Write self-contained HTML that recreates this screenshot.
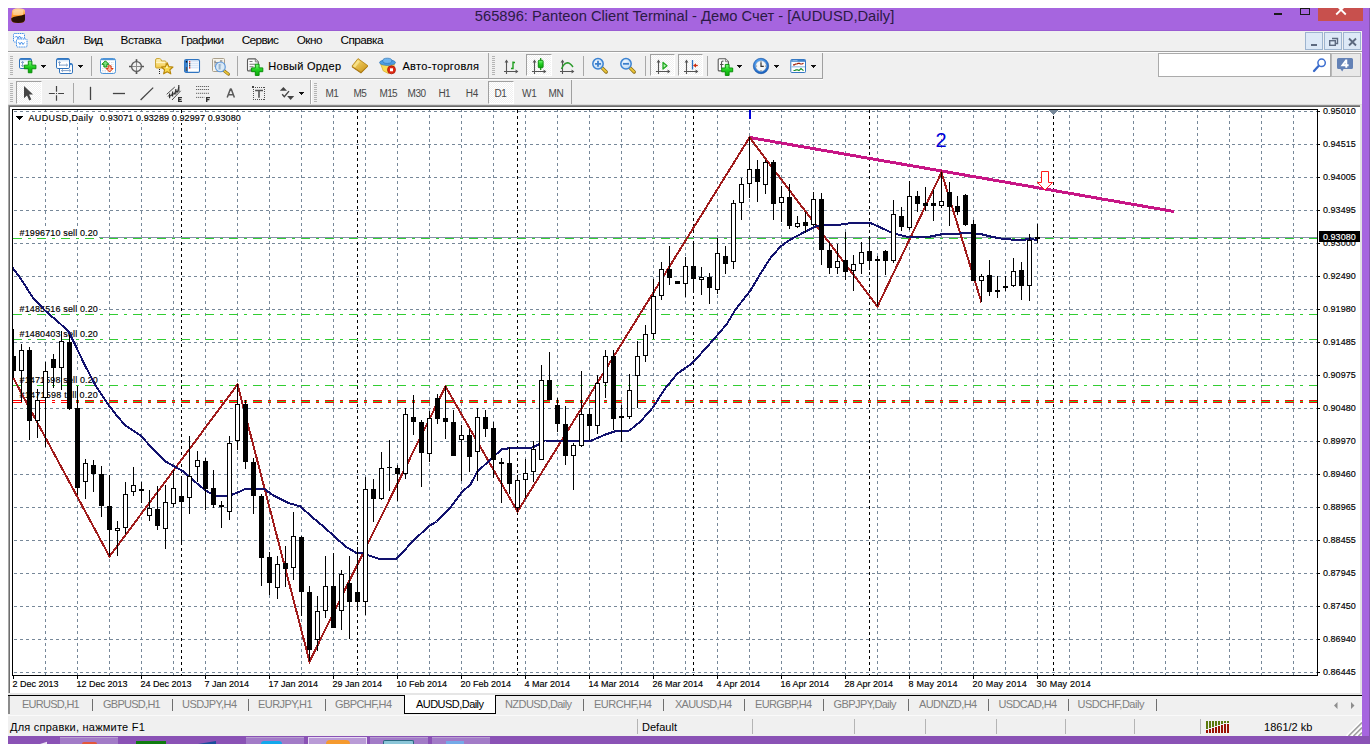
<!DOCTYPE html>
<html><head><meta charset="utf-8"><title>565896: Panteon Client Terminal</title>
<style>
html,body{margin:0;padding:0;background:#fff;width:1370px;height:744px;overflow:hidden}
body{position:relative;font-family:"Liberation Sans", sans-serif}
body>div,body>svg,body>span{position:absolute;display:block}
.t{white-space:pre;font-family:"Liberation Sans", sans-serif}
</style></head><body>
<svg style="left:0;top:0" width="0" height="0"><defs><linearGradient id="gpl" x1="0" y1="0" x2="0" y2="1"><stop offset="0" stop-color="#7dff7d"/><stop offset="0.5" stop-color="#1fd01f"/><stop offset="1" stop-color="#0ca40c"/></linearGradient><linearGradient id="gfo" x1="0" y1="0" x2="0" y2="1"><stop offset="0" stop-color="#fff6c0"/><stop offset="1" stop-color="#f2c744"/></linearGradient><linearGradient id="ggo" x1="0" y1="0" x2="1" y2="1"><stop offset="0" stop-color="#fbe27a"/><stop offset="1" stop-color="#c98f12"/></linearGradient><radialGradient id="gle" cx="0.4" cy="0.35" r="0.7"><stop offset="0" stop-color="#f4faff"/><stop offset="1" stop-color="#b9d6f2"/></radialGradient><linearGradient id="gor" x1="0" y1="0" x2="0" y2="1"><stop offset="0" stop-color="#ffd9a0"/><stop offset="0.5" stop-color="#ff9a2a"/><stop offset="1" stop-color="#f07a10"/></linearGradient><radialGradient id="gck" cx="0.4" cy="0.3" r="0.8"><stop offset="0" stop-color="#5fb0ff"/><stop offset="1" stop-color="#1258b8"/></radialGradient></defs></svg>
<div style="left:8px;top:8px;width:1362px;height:23px;background:#a665df;"></div>
<div style="left:1362px;top:8px;width:8px;height:736px;background:#a665df;"></div>
<div style="left:8px;top:31px;width:1354px;height:705px;background:#f0f0f0;"></div>
<div style="left:8px;top:30px;width:1354px;height:1px;background:#9a5cd2;"></div>
<svg style="left:11px;top:8px;overflow:visible" width="15" height="15" viewBox="0 0 15 15" ><path d="M1 4Q1 0.3 7 0.3Q14 0.3 14 3V11.5Q14 15 7.2 15Q0.3 15 0.3 11.5Z" fill="url(#gor)"/><path d="M2.2 3Q6 0.8 12 2.2V7H2.2Z" fill="#ffe2c0" opacity="0.55"/><path d="M0.3 10.2Q2 8.8 6 8.2Q11 7.6 14 6.2V11.5Q14 15 7.2 15Q0.3 15 0.3 11.5Z" fill="#2a1206"/></svg>
<span class="t" style="left:474.8px;top:8.56px;font-size:14.7px;line-height:14.7px;color:#2b1a45;font-weight:400;letter-spacing:0.011px;">565896: Panteon Client Terminal - Демо Счет - [AUDUSD,Daily]</span>
<div style="left:1274px;top:13px;width:8px;height:2px;background:#1a1a1a;"></div>
<div style="left:1300px;top:8px;width:8px;height:5px;border:1px solid #1a1a1a"></div>
<div style="left:1318px;top:8px;width:45px;height:13px;background:#c8504d;"></div>
<svg style="left:1335px;top:8px" width="12" height="8" viewBox="0 0 12 8"><path d="M1.2 -3 L10.8 6.5 M10.8 -3 L1.2 6.5" stroke="#fff" stroke-width="1.8" fill="none"/></svg>
<svg style="left:12px;top:33px;overflow:visible" width="16" height="15" viewBox="0 0 16 15" ><rect x="1.5" y="0.5" width="11" height="8.5" rx="1" fill="#fff" stroke="#3b8be8" stroke-width="1" stroke-dasharray="1.2 0.6"/><path d="M3 4.5L4.5 3L6 5.5L7.5 3L9 5.5L10.5 4" stroke="#3b8be8" stroke-width="0.9" fill="none"/><rect x="4.5" y="6" width="10.5" height="8" rx="1" fill="#fff" stroke="#3b8be8" stroke-width="1" stroke-dasharray="1.2 0.6"/><path d="M6.5 9L8 11.5L9.5 9L11 11.5L12.5 9.5" stroke="#3b8be8" stroke-width="0.9" fill="none"/></svg>
<span class="t" style="left:36.6px;top:34.91px;font-size:11.8px;line-height:11.8px;color:#000;font-weight:400;letter-spacing:-0.329px;">Файл</span>
<span class="t" style="left:83.6px;top:34.91px;font-size:11.8px;line-height:11.8px;color:#000;font-weight:400;letter-spacing:-1.048px;">Вид</span>
<span class="t" style="left:120.5px;top:34.91px;font-size:11.8px;line-height:11.8px;color:#000;font-weight:400;letter-spacing:-0.480px;">Вставка</span>
<span class="t" style="left:181.1px;top:34.91px;font-size:11.8px;line-height:11.8px;color:#000;font-weight:400;letter-spacing:-0.658px;">Графики</span>
<span class="t" style="left:241.7px;top:34.91px;font-size:11.8px;line-height:11.8px;color:#000;font-weight:400;letter-spacing:-0.651px;">Сервис</span>
<span class="t" style="left:296.7px;top:34.91px;font-size:11.8px;line-height:11.8px;color:#000;font-weight:400;letter-spacing:-0.530px;">Окно</span>
<span class="t" style="left:340.5px;top:34.91px;font-size:11.8px;line-height:11.8px;color:#000;font-weight:400;letter-spacing:-0.540px;">Справка</span>
<div style="left:1305px;top:32px;width:16px;height:16px;background:#dde9f7;border:1px solid #9db4cf"></div>
<svg style="left:1306px;top:34px;overflow:visible" width="16" height="15" viewBox="0 0 16 15" ><rect x="5" y="10" width="6" height="2" fill="#5d6a80"/></svg>
<div style="left:1324px;top:32px;width:16px;height:16px;background:#dde9f7;border:1px solid #9db4cf"></div>
<svg style="left:1325px;top:34px;overflow:visible" width="16" height="15" viewBox="0 0 16 15" ><path d="M7 4.5H12.5V9.5H11" stroke="#5d6a80" stroke-width="1.4" fill="none"/><rect x="4.7" y="6.7" width="5.6" height="4.6" stroke="#5d6a80" stroke-width="1.4" fill="none"/></svg>
<div style="left:1343px;top:32px;width:16px;height:16px;background:#dde9f7;border:1px solid #9db4cf"></div>
<svg style="left:1344px;top:34px;overflow:visible" width="16" height="15" viewBox="0 0 16 15" ><path d="M5 4.5L12 11.5M12 4.5L5 11.5" stroke="#5d6a80" stroke-width="1.9"/></svg>
<div style="left:8px;top:51px;width:1354px;height:1px;background:#a0a0a0;"></div>
<div style="left:8px;top:52px;width:1354px;height:1px;background:#fdfdfd;"></div>
<div style="left:8px;top:78px;width:815px;height:1px;background:#a0a0a0;"></div>
<div style="left:822px;top:53px;width:1px;height:25px;background:#a0a0a0;"></div>
<div style="left:8px;top:79px;width:815px;height:1px;background:#fdfdfd;"></div>
<div style="left:10px;top:56px;width:3px;height:19px;background:repeating-linear-gradient(#b4b4b4 0 1px,transparent 1px 2px)"></div>
<div style="left:492px;top:56px;width:3px;height:19px;background:repeating-linear-gradient(#b4b4b4 0 1px,transparent 1px 2px)"></div>
<div style="left:526px;top:54px;width:24px;height:20px;border-left:1px solid #a0a0a0;border-top:1px solid #a0a0a0;border-right:1px solid #fff;border-bottom:1px solid #fff;background:repeating-conic-gradient(#fff 0 25%,#f0f0f0 0 50%) 0 0/2px 2px"></div>
<div style="left:650px;top:54px;width:23px;height:20px;border-left:1px solid #a0a0a0;border-top:1px solid #a0a0a0;border-right:1px solid #fff;border-bottom:1px solid #fff;background:repeating-conic-gradient(#fff 0 25%,#f0f0f0 0 50%) 0 0/2px 2px"></div>
<div style="left:678px;top:54px;width:23px;height:20px;border-left:1px solid #a0a0a0;border-top:1px solid #a0a0a0;border-right:1px solid #fff;border-bottom:1px solid #fff;background:repeating-conic-gradient(#fff 0 25%,#f0f0f0 0 50%) 0 0/2px 2px"></div>
<svg style="left:19px;top:58px;overflow:visible" width="18" height="16" viewBox="0 0 18 16" ><rect x="0.5" y="0.5" width="12" height="10" rx="1.3" fill="#fff" stroke="#2f72bc" stroke-width="1"/><rect x="1" y="0.8" width="11" height="1.3" fill="#3f82cc"/><rect x="1" y="2.1" width="11" height="1.4" fill="#dce9f8"/><path d="M3.6 3.6V8.6M2.2 5L3.6 3.4L5 5M2.2 7.2L3.6 8.8L5 7.2" stroke="#7f9fc8" stroke-width="1" fill="none"/><path d="M9.299999999999999 3.1499999999999995H12.9V7.1499999999999995H16.9V10.75H12.9V14.75H9.299999999999999V10.75H5.3V7.1499999999999995H9.299999999999999Z" fill="url(#gpl)" stroke="#0a8f0a" stroke-width="1" stroke-linejoin="round"/></svg>
<svg style="left:56px;top:58px;overflow:visible" width="17" height="16" viewBox="0 0 17 16" ><rect x="3.5" y="5.5" width="13" height="10" rx="1.3" fill="#fff" stroke="#2f72bc" stroke-width="1"/><rect x="4" y="5.8" width="12" height="1.3" fill="#3f82cc"/><rect x="4" y="7.1" width="12" height="1.4" fill="#dce9f8"/><path d="M5.6 12.6H14.6M6.8 11.4L5.4 12.6L6.8 13.8M13.4 11.4L14.8 12.6L13.4 13.8" stroke="#7f9fc8" stroke-width="1" fill="none"/><rect x="0.5" y="0.5" width="13" height="10" rx="1.3" fill="#fff" stroke="#2f72bc" stroke-width="1"/><rect x="1" y="0.8" width="12" height="1.3" fill="#3f82cc"/><rect x="1" y="2.1" width="12" height="1.4" fill="#dce9f8"/><path d="M3.5 3.8V8M3.5 7.1H11.4M2.3 5L3.5 3.6L4.7 5M10.2 5.9L11.6 7.1L10.2 8.3" stroke="#7f9fc8" stroke-width="1" fill="none"/></svg>
<svg style="left:100px;top:58px;overflow:visible" width="16" height="16" viewBox="0 0 16 16" ><rect x="0.5" y="0.5" width="15" height="15" rx="2" fill="#fff" stroke="#4f94d8" stroke-width="1"/><rect x="1" y="0.8" width="14" height="1.4" fill="#4f94d8"/><path d="M8.5 4.5H14M8.5 6.5H14M8.5 8.5H14M2 10.5H6M2 12.5H7M2 14H14" stroke="#d0d4da" stroke-width="0.8" stroke-dasharray="1.5 1"/><path d="M5.4 2.8L8.9 6.3H6.9V9H3.9V6.3H1.9Z" fill="#7be07b" stroke="#0c8c0c" stroke-width="1" stroke-linejoin="miter"/><path d="M9.6 14L13.1 10.5H11.1V7.8H8.1V10.5H6.1Z" fill="#ffb49e" stroke="#d83a10" stroke-width="1" stroke-linejoin="miter"/></svg>
<svg style="left:128px;top:58px;overflow:visible" width="17" height="17" viewBox="0 0 17 17" ><path d="M1 8.5H15.9M8.5 1.3V15.9" stroke="#8c8c8c" stroke-width="1"/><path d="M1 8.5H4M13 8.5H15.9M8.5 1.3V4M8.5 13V15.9" stroke="#555" stroke-width="1.7"/><circle cx="8.5" cy="8.5" r="4.9" fill="none" stroke="#5c5c5c" stroke-width="1.3"/></svg>
<svg style="left:155px;top:58px;overflow:visible" width="19" height="17" viewBox="0 0 19 17" ><path d="M0.6 2Q0.6 0.6 2 0.6H4.6Q5.6 0.6 6 1.6L6.5 3H10Q11 3 11 4V9.3Q11 10 10 10H1.6Q0.6 10 0.6 9Z" fill="url(#gfo)" stroke="#c8a02a" stroke-width="1"/><path d="M1 4.3H10.6" stroke="#fffbe0" stroke-width="0.9"/><rect x="4" y="11" width="1" height="1" fill="#222"/><rect x="4" y="13" width="1" height="1" fill="#222"/><rect x="4" y="15" width="1" height="1" fill="#222"/><path d="M12.20 4.80L13.85 8.63L18.00 9.01L14.86 11.77L15.79 15.84L12.20 13.70L8.61 15.84L9.54 11.77L6.40 9.01L10.55 8.63Z" fill="#f8d84e" stroke="#b8860b" stroke-width="1.1" stroke-linejoin="round"/><path d="M12 7.4L13 10L10.4 10.2Z" fill="#fff6b8"/></svg>
<svg style="left:184px;top:58px;overflow:visible" width="16" height="16" viewBox="0 0 16 16" ><rect x="0.6" y="1.6" width="14.9" height="12.8" rx="1.5" fill="#fff" stroke="#2f74c0" stroke-width="1.1"/><rect x="1" y="2" width="3" height="12" fill="#3b82cf"/><rect x="1.8" y="3" width="1.4" height="1.5" fill="#111"/><rect x="1.8" y="9" width="1.4" height="4" fill="#555"/><path d="M5 3.8H14.5M5 5.8H14.5M5 7.8H14.5M5 9.8H14.5" stroke="#c9dcf4" stroke-width="1"/><rect x="5" y="3.2" width="1.3" height="1.3" fill="#e01010"/><rect x="5" y="5.2" width="1.3" height="1.3" fill="#222"/><rect x="5" y="7.2" width="1.3" height="1.3" fill="#222"/><rect x="5" y="9.2" width="1.3" height="1.3" fill="#e01010"/></svg>
<svg style="left:212px;top:58px;overflow:visible" width="18" height="18" viewBox="0 0 18 18" ><rect x="0.5" y="0.5" width="12" height="13" rx="1" fill="#f6f3ea" stroke="#aaa08c" stroke-width="1"/><path d="M3 2.5V9M2 4H4M9 2V8M8 3H10.5M3 4.5H9" stroke="#8a8a8a" stroke-width="0.9" fill="none"/><path d="M12 12.6L16.4 16.2" stroke="#8a6a10" stroke-width="3" stroke-linecap="round"/><path d="M12.2 12.8L16.2 16" stroke="#e9c53a" stroke-width="1.7" stroke-linecap="round"/><circle cx="8.4" cy="8.9" r="4.9" fill="#d6e8f8" fill-opacity="0.85" stroke="#5f9ade" stroke-width="1.1"/><path d="M7.6 6V11.5" stroke="#9ab4cc" stroke-width="2"/></svg>
<svg style="left:247px;top:58px;overflow:visible" width="17" height="18" viewBox="0 0 17 18" ><path d="M0.5 1.9Q0.5 0.9 1.5 0.9H8.3L11.3 3.9V11.9Q11.3 12.9 10.3 12.9H1.5Q0.5 12.9 0.5 11.9Z" fill="#fdfdfd" stroke="#5a5a5a" stroke-width="1.1"/><path d="M8.3 0.9V3.9H11.3" fill="#ddd" stroke="#6f6f6f" stroke-width="0.8"/><path d="M2.5 3.5H5.5M2.5 6.2H8.5M2.5 8.7H6.5M2.5 11.2H5" stroke="#7a7a7a" stroke-width="1.1"/><path d="M8.299999999999999 6.200000000000001H12.1V9.9H15.799999999999999V13.700000000000001H12.1V17.4H8.299999999999999V13.700000000000001H4.6V9.9H8.299999999999999Z" fill="url(#gpl)" stroke="#0a8f0a" stroke-width="1" stroke-linejoin="round"/></svg>
<svg style="left:351px;top:58px;overflow:visible" width="18" height="17" viewBox="0 0 18 17" ><path d="M0.9 9.2L7 1L17 8.6L10 15.6Z" fill="#9c6b10"/><path d="M0.9 8.2L7 0.6L17 7.8L10 14.4Z" fill="url(#ggo)" stroke="#b07f14" stroke-width="0.8" stroke-linejoin="round"/><path d="M2 8.2L7 2L9 3.5L4 9.7Z" fill="#fff2a8" opacity="0.6"/></svg>
<svg style="left:379px;top:58px;overflow:visible" width="17" height="17" viewBox="0 0 17 17" ><path d="M1.5 5.5L15.5 5.5L14 11L9.5 15.6L4.2 12.8Z" fill="#f8dc55" stroke="#d9b02a" stroke-width="0.8" stroke-linejoin="round"/><ellipse cx="8.5" cy="4.6" rx="8" ry="2.8" fill="#4c9de2" stroke="#2b73b8" stroke-width="0.7"/><ellipse cx="8.3" cy="2.8" rx="4.6" ry="2.6" fill="#6fb4ee" stroke="#2b73b8" stroke-width="0.7"/><circle cx="12.5" cy="11.8" r="4" fill="#e02a12" stroke="#a81808" stroke-width="0.8"/><rect x="11" y="10.3" width="3" height="3" fill="#fff"/></svg>
<svg style="left:503px;top:58px;overflow:visible" width="16" height="17" viewBox="0 0 16 17" ><path d="M3.5 3V16M1 13.5H14" stroke="#555" stroke-width="1.1" fill="none"/><path d="M3.5 1.6L1.6 4.4H5.4Z M15.4 13.5L12.6 11.6V15.4Z" fill="#555"/><path d="M10 3.6V11.3M8 10.5H10M10 4.5H12" stroke="#1e9e1e" stroke-width="1.4" fill="none"/></svg>
<svg style="left:531px;top:58px;overflow:visible" width="16" height="17" viewBox="0 0 16 17" ><path d="M3.5 3V16M1 13.5H14" stroke="#555" stroke-width="1.1" fill="none"/><path d="M3.5 1.6L1.6 4.4H5.4Z M15.4 13.5L12.6 11.6V15.4Z" fill="#555"/><path d="M9.7 0V12" stroke="#0f8f0f" stroke-width="1.2"/><rect x="7.3" y="2.3" width="4.8" height="7.4" rx="0.8" fill="url(#gpl)" stroke="#0f8f0f" stroke-width="1"/></svg>
<svg style="left:559px;top:58px;overflow:visible" width="16" height="17" viewBox="0 0 16 17" ><path d="M3.5 3V16M1 13.5H14" stroke="#555" stroke-width="1.1" fill="none"/><path d="M3.5 1.6L1.6 4.4H5.4Z M15.4 13.5L12.6 11.6V15.4Z" fill="#555"/><path d="M2.5 11Q5 5 8.5 4.8Q11 5 14 9" stroke="#2a9a2a" stroke-width="1.4" fill="none"/></svg>
<svg style="left:591px;top:58px;overflow:visible" width="17" height="17" viewBox="0 0 17 17" ><path d="M10.6 9.4L15.2 14.0" stroke="#8a6a10" stroke-width="3.4" stroke-linecap="round"/><path d="M10.8 9.6L15 13.8" stroke="#e9c53a" stroke-width="2" stroke-linecap="round"/><circle cx="7" cy="5.8" r="5.2" fill="url(#gle)" stroke="#3c83d2" stroke-width="1.5"/><path d="M4 5.8H10M7 2.8V8.8" stroke="#3c7fcc" stroke-width="1.8"/></svg>
<svg style="left:619px;top:58px;overflow:visible" width="17" height="17" viewBox="0 0 17 17" ><path d="M10.6 9.4L15.2 14.0" stroke="#8a6a10" stroke-width="3.4" stroke-linecap="round"/><path d="M10.8 9.6L15 13.8" stroke="#e9c53a" stroke-width="2" stroke-linecap="round"/><circle cx="7" cy="5.8" r="5.2" fill="url(#gle)" stroke="#3c83d2" stroke-width="1.5"/><path d="M4 5.8H10" stroke="#3c7fcc" stroke-width="1.8"/></svg>
<svg style="left:655px;top:58px;overflow:visible" width="16" height="17" viewBox="0 0 16 17" ><path d="M3.5 3V16M1 13.5H14" stroke="#555" stroke-width="1.1" fill="none"/><path d="M3.5 1.6L1.6 4.4H5.4Z M15.4 13.5L12.6 11.6V15.4Z" fill="#555"/><path d="M8 4.4L12 7.7L8 11Z" fill="#b8f0b8" stroke="#1faa1f" stroke-width="1.3" stroke-linejoin="round"/></svg>
<svg style="left:683px;top:58px;overflow:visible" width="16" height="17" viewBox="0 0 16 17" ><path d="M3.5 3V16M1 13.5H14" stroke="#555" stroke-width="1.1" fill="none"/><path d="M3.5 1.6L1.6 4.4H5.4Z M15.4 13.5L12.6 11.6V15.4Z" fill="#555"/><path d="M9.5 2V11.5" stroke="#2a6fc0" stroke-width="1.3"/><path d="M10.6 7.5H14.8" stroke="#d03010" stroke-width="1.3"/><path d="M10.3 7.5L13 5.3V9.7Z" fill="#d03010"/></svg>
<svg style="left:716px;top:58px;overflow:visible" width="18" height="18" viewBox="0 0 18 18" ><path d="M2.2 1.7Q2.2 0.7 3.2 0.7H9.399999999999999L12.399999999999999 3.7V11.899999999999999Q12.399999999999999 12.899999999999999 11.399999999999999 12.899999999999999H3.2Q2.2 12.899999999999999 2.2 11.899999999999999Z" fill="#fdfdfd" stroke="#5a5a5a" stroke-width="1.1"/><path d="M9.399999999999999 0.7V3.7H12.399999999999999" fill="#ddd" stroke="#6f6f6f" stroke-width="0.8"/><path d="M7.5 3.2Q5.5 2.8 5.5 5V10.5M4 6.5H7.5" stroke="#555" stroke-width="1.1" fill="none"/><path d="M9.299999999999999 6.4H13.1V10.0H16.7V13.8H13.1V17.4H9.299999999999999V13.8H5.699999999999999V10.0H9.299999999999999Z" fill="url(#gpl)" stroke="#0a8f0a" stroke-width="1" stroke-linejoin="round"/></svg>
<svg style="left:753px;top:58px;overflow:visible" width="16" height="16" viewBox="0 0 16 16" ><circle cx="8" cy="8" r="7.7" fill="url(#gck)" stroke="#0f4c9c" stroke-width="0.6"/><circle cx="8" cy="8" r="5.3" fill="#f4f6f8" stroke="#9ab" stroke-width="0.5"/><path d="M8 4.2V8.3H10.8" stroke="#333" stroke-width="1.2" fill="none"/><circle cx="8" cy="3.6" r="0.5" fill="#666"/><circle cx="8" cy="12.4" r="0.5" fill="#666"/><circle cx="3.6" cy="8" r="0.5" fill="#666"/><circle cx="12.4" cy="8" r="0.5" fill="#666"/></svg>
<svg style="left:790px;top:58px;overflow:visible" width="16" height="16" viewBox="0 0 16 16" ><rect x="0.8" y="1.5" width="14.7" height="13" rx="0.8" fill="#fff" stroke="#3577c2" stroke-width="1"/><rect x="1.2" y="1.8" width="13.9" height="2" fill="#3f82cc"/><rect x="2.5" y="2.3" width="5" height="0.8" fill="#a9cbee"/><rect x="1.3" y="8.2" width="13.7" height="1.2" fill="#9cc0ea"/><path d="M3 6.8H4.5L5.5 6H7L8 5.4H9.5L10.5 6H12L13.5 5.2" stroke="#a3210c" stroke-width="1.2" fill="none"/><path d="M3.5 12.5H5L6 11.8H7.5L9 12.6L11 10.6L13.5 12.6" stroke="#138a24" stroke-width="1.2" fill="none"/></svg>
<svg style="left:41px;top:65px" width="5" height="3" viewBox="0 0 5 3" shape-rendering="crispEdges"><path d="M0 0H5L2.5 3Z" fill="#111"/></svg>
<svg style="left:78px;top:65px" width="5" height="3" viewBox="0 0 5 3" shape-rendering="crispEdges"><path d="M0 0H5L2.5 3Z" fill="#111"/></svg>
<svg style="left:737px;top:65px" width="5" height="3" viewBox="0 0 5 3" shape-rendering="crispEdges"><path d="M0 0H5L2.5 3Z" fill="#111"/></svg>
<svg style="left:774px;top:65px" width="5" height="3" viewBox="0 0 5 3" shape-rendering="crispEdges"><path d="M0 0H5L2.5 3Z" fill="#111"/></svg>
<svg style="left:811px;top:65px" width="5" height="3" viewBox="0 0 5 3" shape-rendering="crispEdges"><path d="M0 0H5L2.5 3Z" fill="#111"/></svg>
<div style="left:91px;top:56px;width:1px;height:20px;background:#a8a8a8;"></div>
<div style="left:237px;top:56px;width:1px;height:20px;background:#a8a8a8;"></div>
<div style="left:583px;top:56px;width:1px;height:20px;background:#a8a8a8;"></div>
<div style="left:645px;top:56px;width:1px;height:20px;background:#a8a8a8;"></div>
<div style="left:707px;top:56px;width:1px;height:20px;background:#a8a8a8;"></div>
<div style="left:488px;top:53px;width:1px;height:25px;background:#a8a8a8;"></div>
<span class="t" style="left:268.3px;top:60.89px;font-size:11px;line-height:11px;color:#000;font-weight:400;letter-spacing:0.264px;-webkit-text-stroke:0.12px #000;">Новый Ордер</span>
<span class="t" style="left:402.4px;top:60.89px;font-size:11px;line-height:11px;color:#000;font-weight:400;letter-spacing:0.335px;-webkit-text-stroke:0.12px #000;">Авто-торговля</span>
<div style="left:1158px;top:53px;width:173px;height:24px;background:#fff;border:1px solid #ababab;box-sizing:border-box"></div>
<svg style="left:1313px;top:58px;overflow:visible" width="14" height="14" viewBox="0 0 14 14" ><path d="M5.5 8L1 13" stroke="#3868c8" stroke-width="2.2" stroke-linecap="round"/><circle cx="8.6" cy="4.8" r="3.7" fill="#fff" stroke="#3d6fd0" stroke-width="1.5"/></svg>
<div style="left:1331px;top:53px;width:30px;height:24px;background:#e9e9e9;border:1px solid #b9b9b9;box-sizing:border-box"></div>
<svg style="left:1337px;top:58px;overflow:visible" width="16" height="14" viewBox="0 0 16 14" ><path d="M1.5 0H14.5Q16 0 16 1.5V9.5Q16 11 14.5 11H6.6L5.2 13.4L3.4 11H1.5Q0 11 0 9.5V1.5Q0 0 1.5 0Z" fill="#6482b6"/><path d="M9.3 1.6V9.8M9.5 1.8L5.4 7.3H11.6" stroke="#fff" stroke-width="1.9" fill="none" stroke-linejoin="miter"/></svg>
<div style="left:10px;top:83px;width:3px;height:19px;background:repeating-linear-gradient(#b4b4b4 0 1px,transparent 1px 2px)"></div>
<div style="left:314px;top:83px;width:3px;height:19px;background:repeating-linear-gradient(#b4b4b4 0 1px,transparent 1px 2px)"></div>
<div style="left:16px;top:81px;width:24px;height:21px;border-left:1px solid #a0a0a0;border-top:1px solid #a0a0a0;border-right:1px solid #fff;border-bottom:1px solid #fff;background:repeating-conic-gradient(#fff 0 25%,#f0f0f0 0 50%) 0 0/2px 2px"></div>
<div style="left:488px;top:81px;width:24px;height:21px;border-left:1px solid #a0a0a0;border-top:1px solid #a0a0a0;border-right:1px solid #fff;border-bottom:1px solid #fff;background:repeating-conic-gradient(#fff 0 25%,#f0f0f0 0 50%) 0 0/2px 2px"></div>
<div style="left:571px;top:80px;width:1px;height:25px;background:#a0a0a0;"></div>
<svg style="left:21px;top:85px;overflow:visible" width="16" height="17" viewBox="0 0 16 17" ><path d="M3 1V13.2L6 10.4L8.2 15.4L10.3 14.5L8.1 9.6H12Z" fill="#444"/></svg>
<svg style="left:48px;top:85px;overflow:visible" width="17" height="17" viewBox="0 0 17 17" ><path d="M0.9 8.5H6.8M10.2 8.5H16M8.5 1V6.8M8.5 10.2V15.8" stroke="#444" stroke-width="1.2"/><rect x="8" y="8" width="1" height="1" fill="#444"/></svg>
<svg style="left:82px;top:85px;overflow:visible" width="17" height="17" viewBox="0 0 17 17" ><path d="M8.5 1.8V15" stroke="#444" stroke-width="1.3"/></svg>
<svg style="left:111px;top:85px;overflow:visible" width="17" height="17" viewBox="0 0 17 17" ><path d="M1.9 8.5H14" stroke="#444" stroke-width="1.3"/></svg>
<svg style="left:139px;top:85px;overflow:visible" width="17" height="17" viewBox="0 0 17 17" ><path d="M1.6 15L14.2 2.6" stroke="#444" stroke-width="1.3"/></svg>
<svg style="left:166px;top:85px;overflow:visible" width="17" height="18" viewBox="0 0 17 18" ><path d="M0.7 9.3L8.8 2M6 15L14.7 5.8" stroke="#4a4a4a" stroke-width="1" fill="none"/><path d="M2 11.6L3.6 9.8L5 11.2L6.6 7.8L8 9.6L9.8 5.4L11.2 7.6L12.8 2" stroke="#333" stroke-width="1" fill="none"/><path d="M3.6 8.4V13.2M6.6 6.6V11.4M9.8 4V9.4M12.8 0V6.8" stroke="#333" stroke-width="1.2" fill="none"/><path d="M12 12H16V13.2H13.4V13.9H15.4V15H13.4V15.8H16V17H12Z" fill="#333"/></svg>
<svg style="left:194px;top:85px;overflow:visible" width="17" height="18" viewBox="0 0 17 18" ><path d="M2.2 1.5H15M2.2 4.5H15M2.2 8.3H15M2.2 12.4H10.5" stroke="#444" stroke-width="1" stroke-dasharray="1 1" fill="none"/><path d="M12 12H16V13.2H13.4V14H15.4V15.2H13.4V17H12Z" fill="#333"/></svg>
<svg style="left:222px;top:85px;overflow:visible" width="17" height="17" viewBox="0 0 17 17" ><path d="M5.2 12.6L8.4 4H9.2L12.4 12.6M6.3 9.8H11.2" stroke="#5a5a5a" stroke-width="1.5" fill="none" stroke-linejoin="round"/></svg>
<svg style="left:250px;top:85px;overflow:visible" width="17" height="17" viewBox="0 0 17 17" ><path d="M3 2.5H15M3 14.5H15M3.5 2V15M14.5 2V15" fill="none" stroke="#505050" stroke-width="1" stroke-dasharray="1 1" shape-rendering="crispEdges"/><rect x="2" y="1" width="2" height="2" fill="#444" shape-rendering="crispEdges"/><path d="M5.1 5.5H13M9 5.5V12.8" stroke="#555" stroke-width="1.6" fill="none"/></svg>
<svg style="left:279px;top:85px;overflow:visible" width="16" height="17" viewBox="0 0 16 17" ><path d="M4.4 2L8 5.8H0.8Z" fill="#444"/><path d="M3.2 9.3L5.3 11.6L10 6.1" stroke="#444" stroke-width="1.4" fill="none"/><path d="M11.6 14.9L8.1 11H15.2Z" fill="#444"/></svg>
<svg style="left:299px;top:92px" width="5" height="3" viewBox="0 0 5 3" shape-rendering="crispEdges"><path d="M0 0H5L2.5 3Z" fill="#111"/></svg>
<div style="left:73px;top:83px;width:1px;height:20px;background:#a8a8a8;"></div>
<div style="left:310px;top:80px;width:1px;height:24px;background:#a8a8a8;"></div>
<div style="left:311px;top:80px;width:1px;height:24px;background:#fff;"></div>
<span class="t" style="left:325.4px;top:88.83px;font-size:10px;line-height:10px;color:#484848;font-weight:400;letter-spacing:-0.403px;">M1</span>
<span class="t" style="left:353.5px;top:88.83px;font-size:10px;line-height:10px;color:#484848;font-weight:400;letter-spacing:-0.703px;">M5</span>
<span class="t" style="left:379.6px;top:88.83px;font-size:10px;line-height:10px;color:#484848;font-weight:400;letter-spacing:-0.684px;">M15</span>
<span class="t" style="left:407.5px;top:88.83px;font-size:10px;line-height:10px;color:#484848;font-weight:400;letter-spacing:-0.451px;">M30</span>
<span class="t" style="left:438.5px;top:88.83px;font-size:10px;line-height:10px;color:#484848;font-weight:400;letter-spacing:-0.648px;">H1</span>
<span class="t" style="left:465.7px;top:88.83px;font-size:10px;line-height:10px;color:#484848;font-weight:400;letter-spacing:-0.248px;">H4</span>
<span class="t" style="left:494.6px;top:88.83px;font-size:10px;line-height:10px;color:#484848;font-weight:400;letter-spacing:-0.448px;">D1</span>
<span class="t" style="left:522px;top:88.83px;font-size:10px;line-height:10px;color:#484848;font-weight:400;letter-spacing:-0.200px;">W1</span>
<span class="t" style="left:548.4px;top:88.83px;font-size:10px;line-height:10px;color:#484848;font-weight:400;letter-spacing:-0.181px;">MN</span>
<div style="left:8px;top:104px;width:1354px;height:1px;background:#dcdcdc;"></div>
<div style="left:8px;top:105px;width:1352px;height:1px;background:#8c8c8c;"></div>
<div style="left:8px;top:106px;width:1352px;height:1px;background:#696969;"></div>
<div style="left:8px;top:107px;width:1352px;height:588px;background:#fff;"></div>
<div style="left:8px;top:105px;width:1px;height:589px;background:#a8a8a8;"></div>
<div style="left:9px;top:106px;width:1px;height:588px;background:#6e6e6e;"></div>
<div style="left:1360px;top:105px;width:2px;height:590px;background:#e3e3e3;"></div>
<svg style="left:0;top:0" width="1370" height="744" viewBox="0 0 1370 744" shape-rendering="crispEdges">
<g stroke="#778899" stroke-width="1" stroke-dasharray="3 3" fill="none">
<path d="M14 111.5H1317" />
<path d="M14 144.5H1317" />
<path d="M14 177.5H1317" />
<path d="M14 210.5H1317" />
<path d="M14 243.5H1317" />
<path d="M14 276.5H1317" />
<path d="M14 309.5H1317" />
<path d="M14 342.5H1317" />
<path d="M14 375.5H1317" />
<path d="M14 408.5H1317" />
<path d="M14 441.5H1317" />
<path d="M14 474.5H1317" />
<path d="M14 507.5H1317" />
<path d="M14 540.5H1317" />
<path d="M14 573.5H1317" />
<path d="M14 606.5H1317" />
<path d="M14 639.5H1317" />
<path d="M14 672.5H1317" />
<path d="M45.5 109V675" />
<path d="M77.5 109V675" />
<path d="M109.5 109V675" />
<path d="M141.5 109V675" />
<path d="M173.5 109V675" />
<path d="M205.5 109V675" />
<path d="M237.5 109V675" />
<path d="M269.5 109V675" />
<path d="M301.5 109V675" />
<path d="M333.5 109V675" />
<path d="M365.5 109V675" />
<path d="M397.5 109V675" />
<path d="M429.5 109V675" />
<path d="M461.5 109V675" />
<path d="M493.5 109V675" />
<path d="M525.5 109V675" />
<path d="M557.5 109V675" />
<path d="M589.5 109V675" />
<path d="M621.5 109V675" />
<path d="M653.5 109V675" />
<path d="M685.5 109V675" />
<path d="M717.5 109V675" />
<path d="M749.5 109V675" />
<path d="M781.5 109V675" />
<path d="M813.5 109V675" />
<path d="M845.5 109V675" />
<path d="M877.5 109V675" />
<path d="M909.5 109V675" />
<path d="M941.5 109V675" />
<path d="M973.5 109V675" />
<path d="M1005.5 109V675" />
<path d="M1037.5 109V675" />
<path d="M1069.5 109V675" />
<path d="M1101.5 109V675" />
<path d="M1133.5 109V675" />
<path d="M1165.5 109V675" />
<path d="M1197.5 109V675" />
<path d="M1229.5 109V675" />
<path d="M1261.5 109V675" />
<path d="M1293.5 109V675" />
</g>
<g stroke="#000" stroke-width="1" stroke-dasharray="3 3" fill="none">
<path d="M181.5 110V675" />
<path d="M357.5 110V675" />
<path d="M517.5 110V675" />
<path d="M693.5 110V675" />
<path d="M869.5 110V675" />
<path d="M1053.5 110V675" />
</g>
<path d="M13 237.5H1318" stroke="#8492a6" stroke-width="1"/>
</svg>
<div style="left:13px;top:226px;width:86px;height:12px;background:#fff;"></div>
<span class="t" style="left:19.5px;top:229.18px;font-size:9px;line-height:9px;color:#000;font-weight:400;letter-spacing:0.135px;transform:scaleY(1.1);transform-origin:0 84.65%;-webkit-text-stroke:0.15px #000;">#1996710 sell 0.20</span>
<div style="left:13px;top:302px;width:86px;height:12px;background:#fff;"></div>
<span class="t" style="left:19.5px;top:305.18px;font-size:9px;line-height:9px;color:#000;font-weight:400;letter-spacing:0.135px;transform:scaleY(1.1);transform-origin:0 84.65%;-webkit-text-stroke:0.15px #000;">#1485516 sell 0.20</span>
<div style="left:13px;top:327px;width:86px;height:12px;background:#fff;"></div>
<span class="t" style="left:19.5px;top:330.18px;font-size:9px;line-height:9px;color:#000;font-weight:400;letter-spacing:0.135px;transform:scaleY(1.1);transform-origin:0 84.65%;-webkit-text-stroke:0.15px #000;">#1480403 sell 0.20</span>
<div style="left:13px;top:373px;width:86px;height:12px;background:#fff;"></div>
<span class="t" style="left:19.5px;top:376.18px;font-size:9px;line-height:9px;color:#000;font-weight:400;letter-spacing:0.135px;transform:scaleY(1.1);transform-origin:0 84.65%;-webkit-text-stroke:0.15px #000;">#1471598 sell 0.20</span>
<div style="left:13px;top:388px;width:86px;height:12px;background:#fff;"></div>
<span class="t" style="left:19.5px;top:391.18px;font-size:9px;line-height:9px;color:#000;font-weight:400;letter-spacing:0.246px;transform:scaleY(1.1);transform-origin:0 84.65%;-webkit-text-stroke:0.15px #000;">#1471598 tpll 0.20</span>
<div style="left:17px;top:113px;width:226px;height:10px;background:#fff;"></div>
<svg style="left:0;top:0" width="1370" height="744" viewBox="0 0 1370 744" shape-rendering="crispEdges">
<path d="M13 238.5H1317" stroke="#32cd32" stroke-width="1" stroke-dasharray="9 6 3 6" stroke-dashoffset="0" fill="none"/>
<path d="M13 314.5H1317" stroke="#32cd32" stroke-width="1" stroke-dasharray="9 6 3 6" stroke-dashoffset="0" fill="none"/>
<path d="M13 339.5H1317" stroke="#32cd32" stroke-width="1" stroke-dasharray="9 6 3 6" stroke-dashoffset="0" fill="none"/>
<path d="M13 385.5H1317" stroke="#32cd32" stroke-width="1" stroke-dasharray="9 6 3 6" stroke-dashoffset="0" fill="none"/>
<path d="M13 400.5H1317" stroke="#ff0000" stroke-width="1" stroke-dasharray="9 6 3 6" stroke-dashoffset="0" fill="none"/>
<path d="M13 402.5H1317" stroke="#ff0000" stroke-width="1" stroke-dasharray="9 6 3 6" stroke-dashoffset="0" fill="none"/>
<path d="M73 401.5H1317" stroke="#32cd32" stroke-width="1" stroke-dasharray="9 6 3 6" stroke-dashoffset="12" fill="none"/>
<path d="M12.5 109V675.5H1317.5V109.5H12" stroke="#000" fill="none"/>
<rect x="1318" y="111" width="2" height="1" fill="#000"/>
<rect x="1318" y="144" width="2" height="1" fill="#000"/>
<rect x="1318" y="177" width="2" height="1" fill="#000"/>
<rect x="1318" y="210" width="2" height="1" fill="#000"/>
<rect x="1318" y="243" width="2" height="1" fill="#000"/>
<rect x="1318" y="276" width="2" height="1" fill="#000"/>
<rect x="1318" y="309" width="2" height="1" fill="#000"/>
<rect x="1318" y="342" width="2" height="1" fill="#000"/>
<rect x="1318" y="375" width="2" height="1" fill="#000"/>
<rect x="1318" y="408" width="2" height="1" fill="#000"/>
<rect x="1318" y="441" width="2" height="1" fill="#000"/>
<rect x="1318" y="474" width="2" height="1" fill="#000"/>
<rect x="1318" y="507" width="2" height="1" fill="#000"/>
<rect x="1318" y="540" width="2" height="1" fill="#000"/>
<rect x="1318" y="573" width="2" height="1" fill="#000"/>
<rect x="1318" y="606" width="2" height="1" fill="#000"/>
<rect x="1318" y="639" width="2" height="1" fill="#000"/>
<rect x="1318" y="672" width="2" height="1" fill="#000"/>
<rect x="13" y="676" width="1" height="3" fill="#000"/>
<rect x="77" y="676" width="1" height="3" fill="#000"/>
<rect x="141" y="676" width="1" height="3" fill="#000"/>
<rect x="205" y="676" width="1" height="3" fill="#000"/>
<rect x="269" y="676" width="1" height="3" fill="#000"/>
<rect x="333" y="676" width="1" height="3" fill="#000"/>
<rect x="397" y="676" width="1" height="3" fill="#000"/>
<rect x="461" y="676" width="1" height="3" fill="#000"/>
<rect x="525" y="676" width="1" height="3" fill="#000"/>
<rect x="589" y="676" width="1" height="3" fill="#000"/>
<rect x="653" y="676" width="1" height="3" fill="#000"/>
<rect x="717" y="676" width="1" height="3" fill="#000"/>
<rect x="781" y="676" width="1" height="3" fill="#000"/>
<rect x="845" y="676" width="1" height="3" fill="#000"/>
<rect x="909" y="676" width="1" height="3" fill="#000"/>
<rect x="973" y="676" width="1" height="3" fill="#000"/>
<rect x="1037" y="676" width="1" height="3" fill="#000"/>
<clipPath id="cc"><rect x="13" y="110" width="1304" height="565"/></clipPath>
<g clip-path="url(#cc)">
<path d="M749.5 137.5L1174 211.5" stroke="#c71585" stroke-width="3" fill="none"/>
<path d="M12.5 376.5 L109.5 556.5 L237.5 384.5 L309.5 661.5 L445.5 386.5 L517.5 511.5 L749.5 137.5 L877.5 306.5 L941.5 172.5 L981.5 302.5" stroke="#a01c1c" stroke-width="2" fill="none" stroke-linejoin="miter"/>
<path d="M12.5 267.5 L20.5 278.5 L33.5 298.5 L45.5 311.0 L60.5 324.0 L68.5 331.5 L75.5 345.5 L83.5 362.5 L95.5 385.5 L108.5 405.0 L117.5 416.5 L125.5 425.5 L140.5 435.5 L152.5 448.5 L165.5 461.5 L183.5 471.5 L193.5 480.5 L205.5 490.5 L215.5 496.0 L228.5 496.0 L237.5 492.5 L246.5 488.5 L263.5 488.5 L273.5 495.5 L288.5 503.0 L300.5 506.5 L312.5 517.5 L323.5 526.5 L334.5 536.5 L345.5 546.5 L356.5 553.0 L363.5 553.2 L370.5 556.0 L379.5 559.0 L396.5 559.0 L412.5 541.5 L428.5 526.5 L436.5 521.5 L450.5 507.5 L462.5 491.5 L470.5 484.5 L477.5 471.5 L490.5 459.5 L501.5 449.5 L510.5 448.0 L532.5 447.5 L538.5 444.5 L544.5 440.5 L590.5 441.0 L605.5 434.5 L614.5 431.5 L629.5 430.5 L640.5 421.5 L652.5 408.0 L665.5 388.0 L677.5 373.5 L692.5 363.0 L710.5 343.0 L726.5 324.5 L735.5 309.5 L750.5 290.5 L760.5 273.5 L770.5 258.0 L780.5 246.5 L790.5 239.5 L805.5 231.5 L815.5 226.5 L822.5 225.5 L837.5 225.0 L855.5 222.5 L869.5 222.5 L880.5 227.5 L892.5 233.0 L905.5 236.5 L925.5 237.5 L940.5 234.5 L965.5 233.25 L980.5 234.0 L990.5 236.5 L1000.5 238.5 L1020.5 240.5 L1030.5 238.5 L1037.5 240.5" stroke="#12126e" stroke-width="2" fill="none" stroke-linejoin="round"/>
<rect x="13" y="329" width="1" height="49" fill="#000"/>
<rect x="11" y="356" width="5" height="15" fill="#000"/>
<rect x="21" y="344" width="1" height="58" fill="#000"/>
<rect x="19" y="350" width="5" height="21" fill="#000"/>
<rect x="20" y="351" width="3" height="19" fill="#fff"/>
<rect x="29" y="347" width="1" height="93" fill="#000"/>
<rect x="27" y="350" width="5" height="71" fill="#000"/>
<rect x="37" y="389" width="1" height="49" fill="#000"/>
<rect x="35" y="400" width="5" height="21" fill="#000"/>
<rect x="36" y="401" width="3" height="19" fill="#fff"/>
<rect x="45" y="362" width="1" height="85" fill="#000"/>
<rect x="43" y="371" width="5" height="27" fill="#000"/>
<rect x="44" y="372" width="3" height="25" fill="#fff"/>
<rect x="53" y="354" width="1" height="34" fill="#000"/>
<rect x="51" y="359" width="5" height="9" fill="#000"/>
<rect x="61" y="331" width="1" height="59" fill="#000"/>
<rect x="59" y="341" width="5" height="27" fill="#000"/>
<rect x="60" y="342" width="3" height="25" fill="#fff"/>
<rect x="69" y="335" width="1" height="75" fill="#000"/>
<rect x="67" y="342" width="5" height="67" fill="#000"/>
<rect x="77" y="386" width="1" height="109" fill="#000"/>
<rect x="75" y="408" width="5" height="80" fill="#000"/>
<rect x="85" y="459" width="1" height="40" fill="#000"/>
<rect x="83" y="463" width="5" height="19" fill="#000"/>
<rect x="84" y="464" width="3" height="17" fill="#fff"/>
<rect x="93" y="460" width="1" height="32" fill="#000"/>
<rect x="91" y="465" width="5" height="9" fill="#000"/>
<rect x="101" y="466" width="1" height="51" fill="#000"/>
<rect x="99" y="474" width="5" height="32" fill="#000"/>
<rect x="109" y="475" width="1" height="81" fill="#000"/>
<rect x="107" y="506" width="5" height="24" fill="#000"/>
<rect x="117" y="521" width="1" height="35" fill="#000"/>
<rect x="115" y="528" width="5" height="3" fill="#000"/>
<rect x="116" y="529" width="3" height="1" fill="#fff"/>
<rect x="125" y="482" width="1" height="52" fill="#000"/>
<rect x="123" y="494" width="5" height="34" fill="#000"/>
<rect x="124" y="495" width="3" height="32" fill="#fff"/>
<rect x="133" y="467" width="1" height="29" fill="#000"/>
<rect x="131" y="485" width="5" height="7" fill="#000"/>
<rect x="132" y="486" width="3" height="5" fill="#fff"/>
<rect x="141" y="482" width="1" height="21" fill="#000"/>
<rect x="139" y="489" width="5" height="2" fill="#000"/>
<rect x="149" y="490" width="1" height="31" fill="#000"/>
<rect x="147" y="508" width="5" height="8" fill="#000"/>
<rect x="148" y="509" width="3" height="6" fill="#fff"/>
<rect x="157" y="486" width="1" height="44" fill="#000"/>
<rect x="155" y="509" width="5" height="17" fill="#000"/>
<rect x="165" y="485" width="1" height="64" fill="#000"/>
<rect x="163" y="502" width="5" height="27" fill="#000"/>
<rect x="164" y="503" width="3" height="25" fill="#fff"/>
<rect x="173" y="470" width="1" height="37" fill="#000"/>
<rect x="171" y="488" width="5" height="16" fill="#000"/>
<rect x="172" y="489" width="3" height="14" fill="#fff"/>
<rect x="181" y="478" width="1" height="64" fill="#000"/>
<rect x="179" y="496" width="5" height="6" fill="#000"/>
<rect x="189" y="436" width="1" height="78" fill="#000"/>
<rect x="187" y="476" width="5" height="22" fill="#000"/>
<rect x="188" y="477" width="3" height="20" fill="#fff"/>
<rect x="197" y="451" width="1" height="31" fill="#000"/>
<rect x="195" y="460" width="5" height="7" fill="#000"/>
<rect x="196" y="461" width="3" height="5" fill="#fff"/>
<rect x="205" y="458" width="1" height="52" fill="#000"/>
<rect x="203" y="461" width="5" height="28" fill="#000"/>
<rect x="213" y="470" width="1" height="38" fill="#000"/>
<rect x="211" y="488" width="5" height="17" fill="#000"/>
<rect x="221" y="501" width="1" height="27" fill="#000"/>
<rect x="219" y="505" width="5" height="2" fill="#000"/>
<rect x="229" y="436" width="1" height="84" fill="#000"/>
<rect x="227" y="443" width="5" height="69" fill="#000"/>
<rect x="228" y="444" width="3" height="67" fill="#fff"/>
<rect x="237" y="384" width="1" height="66" fill="#000"/>
<rect x="235" y="404" width="5" height="37" fill="#000"/>
<rect x="236" y="405" width="3" height="35" fill="#fff"/>
<rect x="245" y="400" width="1" height="69" fill="#000"/>
<rect x="243" y="404" width="5" height="58" fill="#000"/>
<rect x="253" y="458" width="1" height="56" fill="#000"/>
<rect x="251" y="462" width="5" height="34" fill="#000"/>
<rect x="261" y="494" width="1" height="92" fill="#000"/>
<rect x="259" y="496" width="5" height="62" fill="#000"/>
<rect x="269" y="552" width="1" height="43" fill="#000"/>
<rect x="267" y="557" width="5" height="26" fill="#000"/>
<rect x="277" y="556" width="1" height="43" fill="#000"/>
<rect x="275" y="564" width="5" height="24" fill="#000"/>
<rect x="276" y="565" width="3" height="22" fill="#fff"/>
<rect x="285" y="546" width="1" height="41" fill="#000"/>
<rect x="283" y="563" width="5" height="6" fill="#000"/>
<rect x="293" y="512" width="1" height="68" fill="#000"/>
<rect x="291" y="536" width="5" height="32" fill="#000"/>
<rect x="292" y="537" width="3" height="30" fill="#fff"/>
<rect x="301" y="536" width="1" height="80" fill="#000"/>
<rect x="299" y="537" width="5" height="55" fill="#000"/>
<rect x="309" y="586" width="1" height="75" fill="#000"/>
<rect x="307" y="592" width="5" height="58" fill="#000"/>
<rect x="317" y="596" width="1" height="55" fill="#000"/>
<rect x="315" y="611" width="5" height="29" fill="#000"/>
<rect x="316" y="612" width="3" height="27" fill="#fff"/>
<rect x="325" y="556" width="1" height="62" fill="#000"/>
<rect x="323" y="586" width="5" height="25" fill="#000"/>
<rect x="324" y="587" width="3" height="23" fill="#fff"/>
<rect x="333" y="553" width="1" height="75" fill="#000"/>
<rect x="331" y="586" width="5" height="42" fill="#000"/>
<rect x="341" y="570" width="1" height="60" fill="#000"/>
<rect x="339" y="574" width="5" height="37" fill="#000"/>
<rect x="340" y="575" width="3" height="35" fill="#fff"/>
<rect x="349" y="556" width="1" height="83" fill="#000"/>
<rect x="347" y="583" width="5" height="19" fill="#000"/>
<rect x="357" y="547" width="1" height="64" fill="#000"/>
<rect x="355" y="592" width="5" height="10" fill="#000"/>
<rect x="365" y="477" width="1" height="138" fill="#000"/>
<rect x="363" y="489" width="5" height="113" fill="#000"/>
<rect x="364" y="490" width="3" height="111" fill="#fff"/>
<rect x="373" y="479" width="1" height="43" fill="#000"/>
<rect x="371" y="489" width="5" height="10" fill="#000"/>
<rect x="381" y="452" width="1" height="48" fill="#000"/>
<rect x="379" y="468" width="5" height="31" fill="#000"/>
<rect x="380" y="469" width="3" height="29" fill="#fff"/>
<rect x="389" y="440" width="1" height="51" fill="#000"/>
<rect x="387" y="467" width="5" height="1" fill="#000"/>
<rect x="397" y="465" width="1" height="36" fill="#000"/>
<rect x="395" y="468" width="5" height="6" fill="#000"/>
<rect x="405" y="408" width="1" height="71" fill="#000"/>
<rect x="403" y="414" width="5" height="60" fill="#000"/>
<rect x="404" y="415" width="3" height="58" fill="#fff"/>
<rect x="413" y="395" width="1" height="40" fill="#000"/>
<rect x="411" y="417" width="5" height="5" fill="#000"/>
<rect x="421" y="420" width="1" height="67" fill="#000"/>
<rect x="419" y="422" width="5" height="31" fill="#000"/>
<rect x="429" y="411" width="1" height="51" fill="#000"/>
<rect x="427" y="418" width="5" height="36" fill="#000"/>
<rect x="428" y="419" width="3" height="34" fill="#fff"/>
<rect x="437" y="394" width="1" height="30" fill="#000"/>
<rect x="435" y="398" width="5" height="21" fill="#000"/>
<rect x="445" y="386" width="1" height="53" fill="#000"/>
<rect x="443" y="418" width="5" height="4" fill="#000"/>
<rect x="453" y="410" width="1" height="46" fill="#000"/>
<rect x="451" y="422" width="5" height="34" fill="#000"/>
<rect x="461" y="425" width="1" height="56" fill="#000"/>
<rect x="459" y="435" width="5" height="5" fill="#000"/>
<rect x="460" y="436" width="3" height="3" fill="#fff"/>
<rect x="469" y="429" width="1" height="43" fill="#000"/>
<rect x="467" y="435" width="5" height="22" fill="#000"/>
<rect x="477" y="408" width="1" height="73" fill="#000"/>
<rect x="475" y="417" width="5" height="35" fill="#000"/>
<rect x="476" y="418" width="3" height="33" fill="#fff"/>
<rect x="485" y="410" width="1" height="27" fill="#000"/>
<rect x="483" y="417" width="5" height="12" fill="#000"/>
<rect x="493" y="422" width="1" height="56" fill="#000"/>
<rect x="491" y="428" width="5" height="32" fill="#000"/>
<rect x="501" y="458" width="1" height="45" fill="#000"/>
<rect x="499" y="462" width="5" height="2" fill="#000"/>
<rect x="509" y="447" width="1" height="47" fill="#000"/>
<rect x="507" y="463" width="5" height="21" fill="#000"/>
<rect x="517" y="475" width="1" height="37" fill="#000"/>
<rect x="515" y="480" width="5" height="28" fill="#000"/>
<rect x="516" y="481" width="3" height="26" fill="#fff"/>
<rect x="525" y="459" width="1" height="39" fill="#000"/>
<rect x="523" y="473" width="5" height="7" fill="#000"/>
<rect x="524" y="474" width="3" height="5" fill="#fff"/>
<rect x="533" y="441" width="1" height="41" fill="#000"/>
<rect x="531" y="449" width="5" height="23" fill="#000"/>
<rect x="532" y="450" width="3" height="21" fill="#fff"/>
<rect x="541" y="365" width="1" height="95" fill="#000"/>
<rect x="539" y="380" width="5" height="80" fill="#000"/>
<rect x="540" y="381" width="3" height="78" fill="#fff"/>
<rect x="549" y="352" width="1" height="48" fill="#000"/>
<rect x="547" y="380" width="5" height="20" fill="#000"/>
<rect x="557" y="398" width="1" height="34" fill="#000"/>
<rect x="555" y="405" width="5" height="19" fill="#000"/>
<rect x="565" y="406" width="1" height="59" fill="#000"/>
<rect x="563" y="424" width="5" height="32" fill="#000"/>
<rect x="573" y="443" width="1" height="47" fill="#000"/>
<rect x="571" y="445" width="5" height="11" fill="#000"/>
<rect x="572" y="446" width="3" height="9" fill="#fff"/>
<rect x="581" y="371" width="1" height="76" fill="#000"/>
<rect x="579" y="414" width="5" height="32" fill="#000"/>
<rect x="580" y="415" width="3" height="30" fill="#fff"/>
<rect x="589" y="408" width="1" height="32" fill="#000"/>
<rect x="587" y="414" width="5" height="12" fill="#000"/>
<rect x="597" y="375" width="1" height="59" fill="#000"/>
<rect x="595" y="383" width="5" height="43" fill="#000"/>
<rect x="596" y="384" width="3" height="41" fill="#fff"/>
<rect x="605" y="350" width="1" height="48" fill="#000"/>
<rect x="603" y="356" width="5" height="27" fill="#000"/>
<rect x="604" y="357" width="3" height="25" fill="#fff"/>
<rect x="613" y="350" width="1" height="80" fill="#000"/>
<rect x="611" y="356" width="5" height="63" fill="#000"/>
<rect x="621" y="405" width="1" height="37" fill="#000"/>
<rect x="619" y="416" width="5" height="2" fill="#000"/>
<rect x="629" y="374" width="1" height="45" fill="#000"/>
<rect x="627" y="390" width="5" height="27" fill="#000"/>
<rect x="628" y="391" width="3" height="25" fill="#fff"/>
<rect x="637" y="341" width="1" height="67" fill="#000"/>
<rect x="635" y="356" width="5" height="20" fill="#000"/>
<rect x="636" y="357" width="3" height="18" fill="#fff"/>
<rect x="645" y="325" width="1" height="37" fill="#000"/>
<rect x="643" y="334" width="5" height="22" fill="#000"/>
<rect x="644" y="335" width="3" height="20" fill="#fff"/>
<rect x="653" y="279" width="1" height="60" fill="#000"/>
<rect x="651" y="296" width="5" height="38" fill="#000"/>
<rect x="652" y="297" width="3" height="36" fill="#fff"/>
<rect x="661" y="262" width="1" height="38" fill="#000"/>
<rect x="659" y="269" width="5" height="27" fill="#000"/>
<rect x="660" y="270" width="3" height="25" fill="#fff"/>
<rect x="669" y="246" width="1" height="39" fill="#000"/>
<rect x="667" y="269" width="5" height="9" fill="#000"/>
<rect x="677" y="281" width="1" height="3" fill="#000"/>
<rect x="675" y="281" width="5" height="3" fill="#000"/>
<rect x="685" y="257" width="1" height="40" fill="#000"/>
<rect x="683" y="266" width="5" height="18" fill="#000"/>
<rect x="684" y="267" width="3" height="16" fill="#fff"/>
<rect x="693" y="241" width="1" height="51" fill="#000"/>
<rect x="691" y="266" width="5" height="13" fill="#000"/>
<rect x="701" y="267" width="1" height="28" fill="#000"/>
<rect x="699" y="277" width="5" height="3" fill="#000"/>
<rect x="700" y="278" width="3" height="1" fill="#fff"/>
<rect x="709" y="273" width="1" height="31" fill="#000"/>
<rect x="707" y="277" width="5" height="11" fill="#000"/>
<rect x="717" y="238" width="1" height="56" fill="#000"/>
<rect x="715" y="253" width="5" height="37" fill="#000"/>
<rect x="716" y="254" width="3" height="35" fill="#fff"/>
<rect x="725" y="246" width="1" height="28" fill="#000"/>
<rect x="723" y="256" width="5" height="8" fill="#000"/>
<rect x="733" y="200" width="1" height="69" fill="#000"/>
<rect x="731" y="203" width="5" height="59" fill="#000"/>
<rect x="732" y="204" width="3" height="57" fill="#fff"/>
<rect x="741" y="178" width="1" height="42" fill="#000"/>
<rect x="739" y="184" width="5" height="19" fill="#000"/>
<rect x="740" y="185" width="3" height="17" fill="#fff"/>
<rect x="749" y="137" width="1" height="61" fill="#000"/>
<rect x="747" y="169" width="5" height="15" fill="#000"/>
<rect x="748" y="170" width="3" height="13" fill="#fff"/>
<rect x="757" y="160" width="1" height="42" fill="#000"/>
<rect x="755" y="169" width="5" height="13" fill="#000"/>
<rect x="765" y="160" width="1" height="34" fill="#000"/>
<rect x="763" y="162" width="5" height="23" fill="#000"/>
<rect x="764" y="163" width="3" height="21" fill="#fff"/>
<rect x="773" y="160" width="1" height="60" fill="#000"/>
<rect x="771" y="162" width="5" height="42" fill="#000"/>
<rect x="781" y="186" width="1" height="36" fill="#000"/>
<rect x="779" y="197" width="5" height="6" fill="#000"/>
<rect x="780" y="198" width="3" height="4" fill="#fff"/>
<rect x="789" y="184" width="1" height="45" fill="#000"/>
<rect x="787" y="197" width="5" height="29" fill="#000"/>
<rect x="797" y="216" width="1" height="12" fill="#000"/>
<rect x="795" y="223" width="5" height="4" fill="#000"/>
<rect x="796" y="224" width="3" height="2" fill="#fff"/>
<rect x="805" y="212" width="1" height="21" fill="#000"/>
<rect x="803" y="222" width="5" height="4" fill="#000"/>
<rect x="813" y="192" width="1" height="34" fill="#000"/>
<rect x="811" y="199" width="5" height="26" fill="#000"/>
<rect x="812" y="200" width="3" height="24" fill="#fff"/>
<rect x="821" y="193" width="1" height="72" fill="#000"/>
<rect x="819" y="199" width="5" height="51" fill="#000"/>
<rect x="829" y="242" width="1" height="32" fill="#000"/>
<rect x="827" y="250" width="5" height="18" fill="#000"/>
<rect x="837" y="244" width="1" height="30" fill="#000"/>
<rect x="835" y="261" width="5" height="7" fill="#000"/>
<rect x="836" y="262" width="3" height="5" fill="#fff"/>
<rect x="845" y="232" width="1" height="48" fill="#000"/>
<rect x="843" y="260" width="5" height="12" fill="#000"/>
<rect x="853" y="255" width="1" height="36" fill="#000"/>
<rect x="851" y="264" width="5" height="7" fill="#000"/>
<rect x="852" y="265" width="3" height="5" fill="#fff"/>
<rect x="861" y="242" width="1" height="32" fill="#000"/>
<rect x="859" y="252" width="5" height="12" fill="#000"/>
<rect x="860" y="253" width="3" height="10" fill="#fff"/>
<rect x="869" y="236" width="1" height="34" fill="#000"/>
<rect x="867" y="251" width="5" height="10" fill="#000"/>
<rect x="877" y="256" width="1" height="50" fill="#000"/>
<rect x="875" y="259" width="5" height="2" fill="#000"/>
<rect x="885" y="250" width="1" height="25" fill="#000"/>
<rect x="883" y="251" width="5" height="10" fill="#000"/>
<rect x="893" y="200" width="1" height="63" fill="#000"/>
<rect x="891" y="214" width="5" height="47" fill="#000"/>
<rect x="892" y="215" width="3" height="45" fill="#fff"/>
<rect x="901" y="207" width="1" height="24" fill="#000"/>
<rect x="899" y="216" width="5" height="11" fill="#000"/>
<rect x="909" y="181" width="1" height="49" fill="#000"/>
<rect x="907" y="196" width="5" height="32" fill="#000"/>
<rect x="908" y="197" width="3" height="30" fill="#fff"/>
<rect x="917" y="191" width="1" height="21" fill="#000"/>
<rect x="915" y="196" width="5" height="8" fill="#000"/>
<rect x="925" y="187" width="1" height="24" fill="#000"/>
<rect x="923" y="203" width="5" height="3" fill="#000"/>
<rect x="933" y="190" width="1" height="31" fill="#000"/>
<rect x="931" y="203" width="5" height="3" fill="#000"/>
<rect x="941" y="172" width="1" height="36" fill="#000"/>
<rect x="939" y="201" width="5" height="5" fill="#000"/>
<rect x="940" y="202" width="3" height="3" fill="#fff"/>
<rect x="949" y="182" width="1" height="44" fill="#000"/>
<rect x="947" y="192" width="5" height="15" fill="#000"/>
<rect x="957" y="196" width="1" height="19" fill="#000"/>
<rect x="955" y="206" width="5" height="6" fill="#000"/>
<rect x="965" y="194" width="1" height="32" fill="#000"/>
<rect x="963" y="195" width="5" height="30" fill="#000"/>
<rect x="973" y="220" width="1" height="61" fill="#000"/>
<rect x="971" y="224" width="5" height="57" fill="#000"/>
<rect x="981" y="274" width="1" height="28" fill="#000"/>
<rect x="979" y="276" width="5" height="5" fill="#000"/>
<rect x="980" y="277" width="3" height="3" fill="#fff"/>
<rect x="989" y="260" width="1" height="36" fill="#000"/>
<rect x="987" y="275" width="5" height="17" fill="#000"/>
<rect x="997" y="276" width="1" height="22" fill="#000"/>
<rect x="995" y="290" width="5" height="2" fill="#000"/>
<rect x="1005" y="276" width="1" height="15" fill="#000"/>
<rect x="1003" y="286" width="5" height="2" fill="#000"/>
<rect x="1013" y="258" width="1" height="29" fill="#000"/>
<rect x="1011" y="271" width="5" height="15" fill="#000"/>
<rect x="1012" y="272" width="3" height="13" fill="#fff"/>
<rect x="1021" y="262" width="1" height="38" fill="#000"/>
<rect x="1019" y="270" width="5" height="16" fill="#000"/>
<rect x="1029" y="234" width="1" height="67" fill="#000"/>
<rect x="1027" y="240" width="5" height="46" fill="#000"/>
<rect x="1028" y="241" width="3" height="44" fill="#fff"/>
<rect x="1037" y="224" width="1" height="19" fill="#000"/>
<rect x="1035" y="237" width="5" height="2" fill="#000"/>
<rect x="749" y="110" width="2" height="9" fill="#0000d8"/>
<path d="M1048 110H1059L1053.5 115Z" fill="#778899"/>
</g>
<path d="M1041.5 171.5H1048.5V182.5H1052.5L1045 190L1037.5 182.5H1041.5Z" stroke="#ff1a1a" stroke-width="1" fill="#fff" shape-rendering="auto"/>
</svg>
<svg style="left:16px;top:116px" width="8" height="5" viewBox="0 0 8 5" shape-rendering="crispEdges"><path d="M0 0H7V1H6V2H5V3H4V4H3V3H2V2H1V1H0Z" fill="#000"/></svg>
<span class="t" style="left:28.5px;top:114.18px;font-size:9px;line-height:9px;color:#000;font-weight:400;letter-spacing:0.357px;transform:scaleY(1.1);transform-origin:0 84.65%;-webkit-text-stroke:0.15px #000;">AUDUSD,Daily</span>
<span class="t" style="left:100.1px;top:114.18px;font-size:9px;line-height:9px;color:#000;font-weight:400;letter-spacing:0.102px;transform:scaleY(1.1);transform-origin:0 84.65%;-webkit-text-stroke:0.15px #000;">0.93071 0.93289 0.92997 0.93080</span>
<span class="t" style="left:935.5px;top:130.07px;font-size:20px;line-height:20px;color:#0000d8;font-weight:400;letter-spacing:-0.625px;">2</span>
<span class="t" style="left:1323px;top:107.18px;font-size:9px;line-height:9px;color:#000;font-weight:400;letter-spacing:0.036px;transform:scaleY(1.1);transform-origin:0 84.65%;-webkit-text-stroke:0.15px #000;">0.95010</span>
<span class="t" style="left:1323px;top:140.18px;font-size:9px;line-height:9px;color:#000;font-weight:400;letter-spacing:0.036px;transform:scaleY(1.1);transform-origin:0 84.65%;-webkit-text-stroke:0.15px #000;">0.94515</span>
<span class="t" style="left:1323px;top:173.18px;font-size:9px;line-height:9px;color:#000;font-weight:400;letter-spacing:0.036px;transform:scaleY(1.1);transform-origin:0 84.65%;-webkit-text-stroke:0.15px #000;">0.94005</span>
<span class="t" style="left:1323px;top:206.18px;font-size:9px;line-height:9px;color:#000;font-weight:400;letter-spacing:0.036px;transform:scaleY(1.1);transform-origin:0 84.65%;-webkit-text-stroke:0.15px #000;">0.93495</span>
<span class="t" style="left:1323px;top:239.18px;font-size:9px;line-height:9px;color:#000;font-weight:400;letter-spacing:0.036px;transform:scaleY(1.1);transform-origin:0 84.65%;-webkit-text-stroke:0.15px #000;">0.93000</span>
<span class="t" style="left:1323px;top:272.18px;font-size:9px;line-height:9px;color:#000;font-weight:400;letter-spacing:0.036px;transform:scaleY(1.1);transform-origin:0 84.65%;-webkit-text-stroke:0.15px #000;">0.92490</span>
<span class="t" style="left:1323px;top:305.18px;font-size:9px;line-height:9px;color:#000;font-weight:400;letter-spacing:0.036px;transform:scaleY(1.1);transform-origin:0 84.65%;-webkit-text-stroke:0.15px #000;">0.91980</span>
<span class="t" style="left:1323px;top:338.18px;font-size:9px;line-height:9px;color:#000;font-weight:400;letter-spacing:0.036px;transform:scaleY(1.1);transform-origin:0 84.65%;-webkit-text-stroke:0.15px #000;">0.91485</span>
<span class="t" style="left:1323px;top:371.18px;font-size:9px;line-height:9px;color:#000;font-weight:400;letter-spacing:0.036px;transform:scaleY(1.1);transform-origin:0 84.65%;-webkit-text-stroke:0.15px #000;">0.90975</span>
<span class="t" style="left:1323px;top:404.18px;font-size:9px;line-height:9px;color:#000;font-weight:400;letter-spacing:0.036px;transform:scaleY(1.1);transform-origin:0 84.65%;-webkit-text-stroke:0.15px #000;">0.90480</span>
<span class="t" style="left:1323px;top:437.18px;font-size:9px;line-height:9px;color:#000;font-weight:400;letter-spacing:0.036px;transform:scaleY(1.1);transform-origin:0 84.65%;-webkit-text-stroke:0.15px #000;">0.89970</span>
<span class="t" style="left:1323px;top:470.18px;font-size:9px;line-height:9px;color:#000;font-weight:400;letter-spacing:0.036px;transform:scaleY(1.1);transform-origin:0 84.65%;-webkit-text-stroke:0.15px #000;">0.89460</span>
<span class="t" style="left:1323px;top:503.18px;font-size:9px;line-height:9px;color:#000;font-weight:400;letter-spacing:0.036px;transform:scaleY(1.1);transform-origin:0 84.65%;-webkit-text-stroke:0.15px #000;">0.88965</span>
<span class="t" style="left:1323px;top:536.18px;font-size:9px;line-height:9px;color:#000;font-weight:400;letter-spacing:0.036px;transform:scaleY(1.1);transform-origin:0 84.65%;-webkit-text-stroke:0.15px #000;">0.88455</span>
<span class="t" style="left:1323px;top:569.18px;font-size:9px;line-height:9px;color:#000;font-weight:400;letter-spacing:0.036px;transform:scaleY(1.1);transform-origin:0 84.65%;-webkit-text-stroke:0.15px #000;">0.87945</span>
<span class="t" style="left:1323px;top:602.18px;font-size:9px;line-height:9px;color:#000;font-weight:400;letter-spacing:0.036px;transform:scaleY(1.1);transform-origin:0 84.65%;-webkit-text-stroke:0.15px #000;">0.87450</span>
<span class="t" style="left:1323px;top:635.18px;font-size:9px;line-height:9px;color:#000;font-weight:400;letter-spacing:0.036px;transform:scaleY(1.1);transform-origin:0 84.65%;-webkit-text-stroke:0.15px #000;">0.86940</span>
<span class="t" style="left:1323px;top:668.18px;font-size:9px;line-height:9px;color:#000;font-weight:400;letter-spacing:0.036px;transform:scaleY(1.1);transform-origin:0 84.65%;-webkit-text-stroke:0.15px #000;">0.86445</span>
<div style="left:1319px;top:231px;width:41px;height:11px;background:#000;"></div>
<span class="t" style="left:1323px;top:233.38px;font-size:9px;line-height:9px;color:#fff;font-weight:400;letter-spacing:0.036px;transform:scaleY(1.1);transform-origin:0 84.65%;-webkit-text-stroke:0.15px #fff;">0.93080</span>
<span class="t" style="left:12.5px;top:680.48px;font-size:9px;line-height:9px;color:#000;font-weight:400;transform:scaleY(1.1);transform-origin:0 84.65%;-webkit-text-stroke:0.15px #000;letter-spacing:0px;">2 Dec 2013</span>
<span class="t" style="left:76.5px;top:680.48px;font-size:9px;line-height:9px;color:#000;font-weight:400;transform:scaleY(1.1);transform-origin:0 84.65%;-webkit-text-stroke:0.15px #000;letter-spacing:0px;">12 Dec 2013</span>
<span class="t" style="left:140.5px;top:680.48px;font-size:9px;line-height:9px;color:#000;font-weight:400;transform:scaleY(1.1);transform-origin:0 84.65%;-webkit-text-stroke:0.15px #000;letter-spacing:0px;">24 Dec 2013</span>
<span class="t" style="left:204.5px;top:680.48px;font-size:9px;line-height:9px;color:#000;font-weight:400;transform:scaleY(1.1);transform-origin:0 84.65%;-webkit-text-stroke:0.15px #000;letter-spacing:0px;">7 Jan 2014</span>
<span class="t" style="left:268.5px;top:680.48px;font-size:9px;line-height:9px;color:#000;font-weight:400;transform:scaleY(1.1);transform-origin:0 84.65%;-webkit-text-stroke:0.15px #000;letter-spacing:0px;">17 Jan 2014</span>
<span class="t" style="left:332.5px;top:680.48px;font-size:9px;line-height:9px;color:#000;font-weight:400;transform:scaleY(1.1);transform-origin:0 84.65%;-webkit-text-stroke:0.15px #000;letter-spacing:0px;">29 Jan 2014</span>
<span class="t" style="left:396.5px;top:680.48px;font-size:9px;line-height:9px;color:#000;font-weight:400;transform:scaleY(1.1);transform-origin:0 84.65%;-webkit-text-stroke:0.15px #000;letter-spacing:0px;">10 Feb 2014</span>
<span class="t" style="left:460.5px;top:680.48px;font-size:9px;line-height:9px;color:#000;font-weight:400;transform:scaleY(1.1);transform-origin:0 84.65%;-webkit-text-stroke:0.15px #000;letter-spacing:0px;">20 Feb 2014</span>
<span class="t" style="left:524.5px;top:680.48px;font-size:9px;line-height:9px;color:#000;font-weight:400;transform:scaleY(1.1);transform-origin:0 84.65%;-webkit-text-stroke:0.15px #000;letter-spacing:0px;">4 Mar 2014</span>
<span class="t" style="left:588.5px;top:680.48px;font-size:9px;line-height:9px;color:#000;font-weight:400;transform:scaleY(1.1);transform-origin:0 84.65%;-webkit-text-stroke:0.15px #000;letter-spacing:0px;">14 Mar 2014</span>
<span class="t" style="left:652.5px;top:680.48px;font-size:9px;line-height:9px;color:#000;font-weight:400;transform:scaleY(1.1);transform-origin:0 84.65%;-webkit-text-stroke:0.15px #000;letter-spacing:0px;">26 Mar 2014</span>
<span class="t" style="left:716.5px;top:680.48px;font-size:9px;line-height:9px;color:#000;font-weight:400;transform:scaleY(1.1);transform-origin:0 84.65%;-webkit-text-stroke:0.15px #000;letter-spacing:0px;">4 Apr 2014</span>
<span class="t" style="left:780.5px;top:680.48px;font-size:9px;line-height:9px;color:#000;font-weight:400;transform:scaleY(1.1);transform-origin:0 84.65%;-webkit-text-stroke:0.15px #000;letter-spacing:0px;">16 Apr 2014</span>
<span class="t" style="left:844.5px;top:680.48px;font-size:9px;line-height:9px;color:#000;font-weight:400;transform:scaleY(1.1);transform-origin:0 84.65%;-webkit-text-stroke:0.15px #000;letter-spacing:0px;">28 Apr 2014</span>
<span class="t" style="left:908.5px;top:680.48px;font-size:9px;line-height:9px;color:#000;font-weight:400;transform:scaleY(1.1);transform-origin:0 84.65%;-webkit-text-stroke:0.15px #000;letter-spacing:0.22px;">8 May 2014</span>
<span class="t" style="left:972.5px;top:680.48px;font-size:9px;line-height:9px;color:#000;font-weight:400;transform:scaleY(1.1);transform-origin:0 84.65%;-webkit-text-stroke:0.15px #000;letter-spacing:0.22px;">20 May 2014</span>
<span class="t" style="left:1036.5px;top:680.48px;font-size:9px;line-height:9px;color:#000;font-weight:400;transform:scaleY(1.1);transform-origin:0 84.65%;-webkit-text-stroke:0.15px #000;letter-spacing:0.22px;">30 May 2014</span>
<div style="left:8px;top:693px;width:1352px;height:2px;background:#e6e6e6;"></div>
<div style="left:8px;top:695px;width:1354px;height:1px;background:#000;"></div>
<div style="left:8px;top:696px;width:1354px;height:20px;background:#f0f0f0;"></div>
<div style="left:8px;top:696px;width:2px;height:18px;background:#8c8c8c;"></div>
<div style="left:405px;top:695px;width:90px;height:18px;background:#fff;"></div>
<div style="left:404px;top:695px;width:1px;height:19px;background:#000;"></div>
<div style="left:495px;top:695px;width:1px;height:19px;background:#000;"></div>
<div style="left:404px;top:713px;width:92px;height:1px;background:#000;"></div>
<span class="t" style="left:22px;top:698.89px;font-size:11px;line-height:11px;color:#7f7f7f;font-weight:400;letter-spacing:-0.731px;">EURUSD,H1</span>
<span class="t" style="left:103px;top:698.89px;font-size:11px;line-height:11px;color:#7f7f7f;font-weight:400;letter-spacing:-0.731px;">GBPUSD,H1</span>
<span class="t" style="left:182px;top:698.89px;font-size:11px;line-height:11px;color:#7f7f7f;font-weight:400;letter-spacing:-0.512px;">USDJPY,H4</span>
<span class="t" style="left:258px;top:698.89px;font-size:11px;line-height:11px;color:#7f7f7f;font-weight:400;letter-spacing:-0.568px;">EURJPY,H1</span>
<span class="t" style="left:335px;top:698.89px;font-size:11px;line-height:11px;color:#7f7f7f;font-weight:400;letter-spacing:-0.583px;">GBPCHF,H4</span>
<span class="t" style="left:416px;top:698.89px;font-size:11px;line-height:11px;color:#000;font-weight:400;letter-spacing:-0.539px;">AUDUSD,Daily</span>
<span class="t" style="left:505px;top:698.89px;font-size:11px;line-height:11px;color:#7f7f7f;font-weight:400;letter-spacing:-0.570px;">NZDUSD,Daily</span>
<span class="t" style="left:594px;top:698.89px;font-size:11px;line-height:11px;color:#7f7f7f;font-weight:400;letter-spacing:-0.470px;">EURCHF,H4</span>
<span class="t" style="left:675px;top:698.89px;font-size:11px;line-height:11px;color:#7f7f7f;font-weight:400;letter-spacing:-0.719px;">XAUUSD,H4</span>
<span class="t" style="left:755px;top:698.89px;font-size:11px;line-height:11px;color:#7f7f7f;font-weight:400;letter-spacing:-0.628px;">EURGBP,H4</span>
<span class="t" style="left:833.5px;top:698.89px;font-size:11px;line-height:11px;color:#7f7f7f;font-weight:400;letter-spacing:-0.583px;">GBPJPY,Daily</span>
<span class="t" style="left:919px;top:698.89px;font-size:11px;line-height:11px;color:#7f7f7f;font-weight:400;letter-spacing:-0.606px;">AUDNZD,H4</span>
<span class="t" style="left:998.5px;top:698.89px;font-size:11px;line-height:11px;color:#7f7f7f;font-weight:400;letter-spacing:-0.620px;">USDCAD,H4</span>
<span class="t" style="left:1077.5px;top:698.89px;font-size:11px;line-height:11px;color:#7f7f7f;font-weight:400;letter-spacing:-0.469px;">USDCHF,Daily</span>
<div style="left:92px;top:699px;width:1px;height:12px;background:#6e6e6e;"></div>
<div style="left:172px;top:699px;width:1px;height:12px;background:#6e6e6e;"></div>
<div style="left:248px;top:699px;width:1px;height:12px;background:#6e6e6e;"></div>
<div style="left:325px;top:699px;width:1px;height:12px;background:#6e6e6e;"></div>
<div style="left:583px;top:699px;width:1px;height:12px;background:#6e6e6e;"></div>
<div style="left:663px;top:699px;width:1px;height:12px;background:#6e6e6e;"></div>
<div style="left:744px;top:699px;width:1px;height:12px;background:#6e6e6e;"></div>
<div style="left:823px;top:699px;width:1px;height:12px;background:#6e6e6e;"></div>
<div style="left:908px;top:699px;width:1px;height:12px;background:#6e6e6e;"></div>
<div style="left:988px;top:699px;width:1px;height:12px;background:#6e6e6e;"></div>
<div style="left:1068px;top:699px;width:1px;height:12px;background:#6e6e6e;"></div>
<div style="left:1156px;top:699px;width:1px;height:12px;background:#6e6e6e;"></div>
<svg style="left:1333px;top:701px" width="24" height="9" viewBox="0 0 24 9"><path d="M4.5 1V8L1 4.5Z M18 1V8L21.5 4.5Z" fill="#8e8e8e"/></svg>
<div style="left:8px;top:715px;width:1354px;height:1px;background:#fafafa;"></div>
<span class="t" style="left:10px;top:721.99px;font-size:11px;line-height:11px;color:#000;font-weight:400;letter-spacing:0.232px;">Для справки, нажмите F1</span>
<span class="t" style="left:642px;top:721.99px;font-size:11px;line-height:11px;color:#000;font-weight:400;letter-spacing:0.020px;">Default</span>
<div style="left:637px;top:719px;width:1px;height:15px;background:#b4b4b4;"></div>
<div style="left:752px;top:719px;width:1px;height:15px;background:#b4b4b4;"></div>
<div style="left:854px;top:719px;width:1px;height:15px;background:#b4b4b4;"></div>
<div style="left:925px;top:719px;width:1px;height:15px;background:#b4b4b4;"></div>
<div style="left:996px;top:719px;width:1px;height:15px;background:#b4b4b4;"></div>
<div style="left:1065px;top:719px;width:1px;height:15px;background:#b4b4b4;"></div>
<div style="left:1134px;top:719px;width:1px;height:15px;background:#b4b4b4;"></div>
<div style="left:1200px;top:719px;width:1px;height:15px;background:#b4b4b4;"></div>
<svg style="left:1206px;top:721px;overflow:visible" width="24" height="12" viewBox="0 0 24 12" shape-rendering="crispEdges"><rect x="0" y="0" width="2" height="8" fill="#5b7a0c"/><rect x="0" y="9" width="2" height="3" fill="#9a1202"/><rect x="3" y="0" width="2" height="7" fill="#5b7a0c"/><rect x="3" y="8" width="2" height="4" fill="#9a1202"/><rect x="6" y="0" width="2" height="6" fill="#5b7a0c"/><rect x="6" y="7" width="2" height="5" fill="#9a1202"/><rect x="9" y="0" width="2" height="5" fill="#5b7a0c"/><rect x="9" y="6" width="2" height="6" fill="#9a1202"/><rect x="12" y="0" width="2" height="4" fill="#5b7a0c"/><rect x="12" y="5" width="2" height="7" fill="#9a1202"/><rect x="15" y="0" width="2" height="3" fill="#5b7a0c"/><rect x="15" y="4" width="2" height="8" fill="#9a1202"/><rect x="18" y="0" width="2" height="2" fill="#5b7a0c"/><rect x="18" y="3" width="2" height="9" fill="#9a1202"/><rect x="21" y="0" width="2" height="2" fill="#5b7a0c"/><rect x="21" y="3" width="2" height="9" fill="#9a1202"/></svg>
<span class="t" style="left:1264px;top:721.99px;font-size:11px;line-height:11px;color:#000;font-weight:400;letter-spacing:0.008px;">1861/2 kb</span>
<svg style="left:1346px;top:720px" width="16" height="16" viewBox="0 0 16 16"><path d="M16 0.5L0.5 16M16 5.5L5.5 16M16 10.5L10.5 16" stroke="#fff" stroke-width="1.6"/><path d="M16 2.5L2.5 16M16 7.5L7.5 16M16 12.5L12.5 16" stroke="#a2a2a2" stroke-width="1.6"/></svg>
<div style="left:8px;top:736px;width:1362px;height:8px;background:#8a52b5;"></div>
<div style="left:60px;top:737px;width:58px;height:7px;background:#a27bc7;border-top:1px solid #b79fd0;box-sizing:border-box"></div>
<div style="left:246px;top:737px;width:58px;height:7px;background:#a27bc7;border-top:1px solid #b79fd0;box-sizing:border-box"></div>
<div style="left:308px;top:737px;width:58px;height:7px;background:#b99bd6;border-top:1px solid #b79fd0;box-sizing:border-box"></div>
<div style="left:370px;top:737px;width:58px;height:7px;background:#a27bc7;border-top:1px solid #b79fd0;box-sizing:border-box"></div>
<div style="left:432px;top:737px;width:58px;height:7px;background:#a27bc7;border-top:1px solid #b79fd0;box-sizing:border-box"></div>
<svg style="left:38px;top:741px" width="9" height="3" viewBox="0 0 9 3"><path d="M9 0.8V3H2Z" fill="#ece4f4"/></svg>
<div style="left:82px;top:742px;width:15px;height:2px;background:#e4573a;border-radius:8px 8px 0 0"></div>
<div style="left:136px;top:741px;width:30px;height:3px;background:#107c10;"></div>
<svg style="left:196px;top:741px" width="20" height="3" viewBox="0 0 20 3"><path d="M20 0V3H2Z" fill="#1b4f9c"/></svg>
<div style="left:261px;top:741px;width:21px;height:3px;background:#12a8ec;border-radius:10px 10px 0 0"></div>
<div style="left:326px;top:740px;width:24px;height:4px;background:#f59a2e;border-radius:12px 12px 0 0"></div>
<div style="left:383px;top:740px;width:31px;height:4px;background:#8cc6d8;border:1px solid #2a6a80;border-bottom:none;border-radius:2px 2px 0 0;box-sizing:border-box"></div>
<div style="left:446px;top:741px;width:18px;height:3px;background:#74aae8;"></div>
<div style="left:308px;top:737px;width:57px;height:7px;border:1px solid #e6daf2;border-bottom:none"></div>
<div style="left:1369px;top:8px;width:1px;height:736px;background:#8654b0;"></div>
</body></html>
